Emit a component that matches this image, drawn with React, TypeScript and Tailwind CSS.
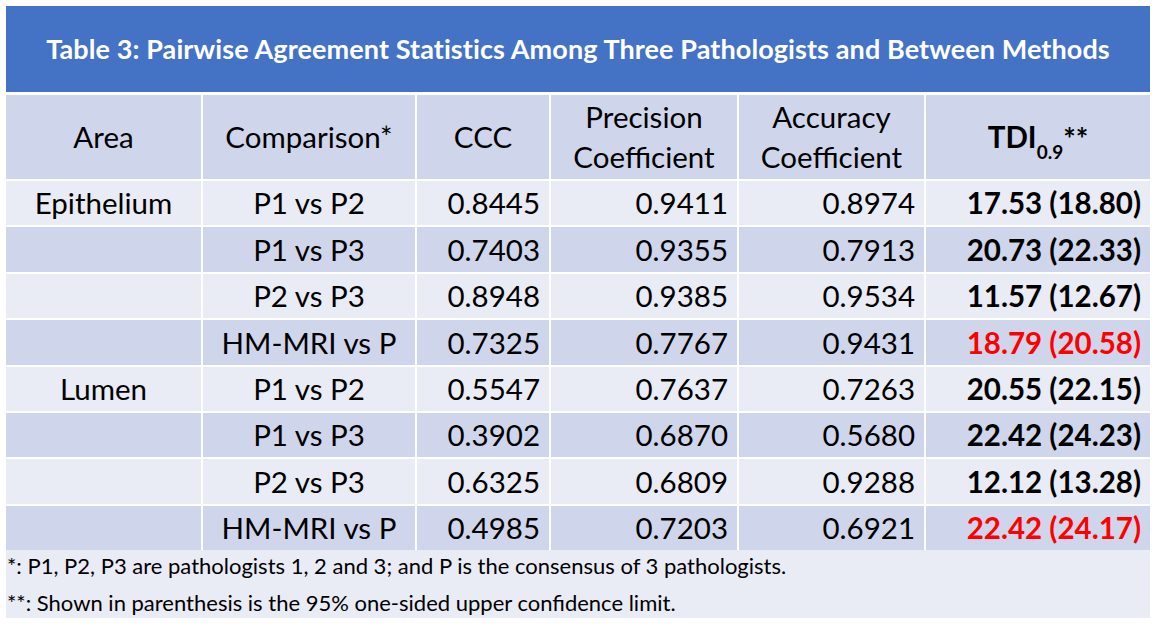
import React from "react";

type Row = {
  area: string;
  comp: string;
  ccc: string;
  prec: string;
  acc: string;
  tdi: string;
  red?: boolean;
};

const rows: Row[] = [
  { area: "Epithelium", comp: "P1 vs P2", ccc: "0.8445", prec: "0.9411", acc: "0.8974", tdi: "17.53 (18.80)" },
  { area: "", comp: "P1 vs P3", ccc: "0.7403", prec: "0.9355", acc: "0.7913", tdi: "20.73 (22.33)" },
  { area: "", comp: "P2 vs P3", ccc: "0.8948", prec: "0.9385", acc: "0.9534", tdi: "11.57 (12.67)" },
  { area: "", comp: "HM-MRI vs P", ccc: "0.7325", prec: "0.7767", acc: "0.9431", tdi: "18.79 (20.58)", red: true },
  { area: "Lumen", comp: "P1 vs P2", ccc: "0.5547", prec: "0.7637", acc: "0.7263", tdi: "20.55 (22.15)" },
  { area: "", comp: "P1 vs P3", ccc: "0.3902", prec: "0.6870", acc: "0.5680", tdi: "22.42 (24.23)" },
  { area: "", comp: "P2 vs P3", ccc: "0.6325", prec: "0.6809", acc: "0.9288", tdi: "12.12 (13.28)" },
  { area: "", comp: "HM-MRI vs P", ccc: "0.4985", prec: "0.7203", acc: "0.6921", tdi: "22.42 (24.17)", red: true },
];

const font = { fontFamily: "Lato, 'Open Sans', sans-serif" };

export default function App() {
  return (
    <div className="w-[1159px] h-[628px] bg-white pt-[6px] pl-[6px]" style={font}>
      <div className="w-[1144px] flex flex-col">
        <div className="h-[86px] bg-[#4472c4] flex items-center justify-center text-white font-bold text-[27px] tracking-[0.1px]">
          Table 3: Pairwise Agreement Statistics Among Three Pathologists and Between Methods
        </div>
        <div className="h-[3px] bg-white" />
        <div className="grid grid-cols-[195px_214px_134px_188px_187px_226px] gap-y-[2px] bg-white text-[29.5px] text-black leading-none">
          <div className="h-[84px] bg-[#cfd5ea] flex items-center justify-center">Area</div>
          <div className="h-[84px] bg-[#cfd5ea] border-l-2 border-white flex items-center justify-center">Comparison*</div>
          <div className="h-[84px] bg-[#cfd5ea] border-l-2 border-white flex items-center justify-center">CCC</div>
          <div className="h-[84px] bg-[#cfd5ea] border-l-2 border-white flex flex-col items-center justify-center leading-[40px]">
            <span>Precision</span>
            <span>Coefficient</span>
          </div>
          <div className="h-[84px] bg-[#cfd5ea] border-l-2 border-white flex flex-col items-center justify-center leading-[40px]">
            <span>Accuracy</span>
            <span>Coefficient</span>
          </div>
          <div className="h-[84px] bg-[#cfd5ea] border-l-2 border-white flex items-center justify-center font-bold">
            <span>
              TDI<sub className="text-[19px] align-[-6px]">0.9</sub>
              <span className="relative top-[2px]">**</span>
            </span>
          </div>
          {rows.map((r, i) => {
            const bg = i % 2 === 0 ? "bg-[#e9ebf5]" : "bg-[#cfd5ea]";
            return (
              <React.Fragment key={i}>
                <div className={`h-[44.4px] ${bg} flex items-center justify-center`}>{r.area}</div>
                <div className={`h-[44.4px] ${bg} border-l-2 border-white flex items-center justify-center`}>{r.comp}</div>
                <div className={`h-[44.4px] ${bg} border-l-2 border-white flex items-center justify-end pr-[9px]`}>{r.ccc}</div>
                <div className={`h-[44.4px] ${bg} border-l-2 border-white flex items-center justify-end pr-[9px]`}>{r.prec}</div>
                <div className={`h-[44.4px] ${bg} border-l-2 border-white flex items-center justify-end pr-[9px]`}>{r.acc}</div>
                <div
                  className={`h-[44.4px] ${bg} border-l-2 border-white flex items-center justify-end pr-[9px] font-bold ${
                    r.red ? "text-[#ff0000]" : "text-black"
                  }`}
                >
                  {r.tdi}
                </div>
              </React.Fragment>
            );
          })}
        </div>
        <div className="h-[68px] bg-[#e9ebf5] flex flex-col justify-center text-[22px] text-black leading-[37px] pl-[1px]">
          <div>*: P1, P2, P3 are pathologists 1, 2 and 3; and P is the consensus of 3 pathologists.</div>
          <div>**: Shown in parenthesis is the 95% one-sided upper confidence limit.</div>
        </div>
      </div>
    </div>
  );
}
